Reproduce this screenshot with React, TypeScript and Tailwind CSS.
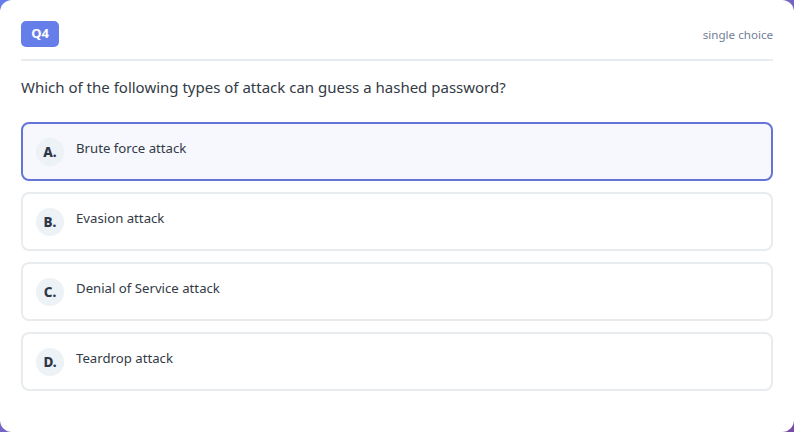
import React, { useState } from 'react'

const options = [
  { key: 'A', text: 'Brute force attack' },
  { key: 'B', text: 'Evasion attack' },
  { key: 'C', text: 'Denial of Service attack' },
  { key: 'D', text: 'Teardrop attack' },
]

export default function App() {
  const [selected, setSelected] = useState('A')

  return (
    <div className="h-[432px] w-full bg-gradient-to-br from-[#667eea] to-[#764ba2]">
      <div
        className="h-[432px] w-full rounded-[12px] bg-white px-[21px] pt-[21px]"
        style={{ fontFamily: '"Noto Sans", "Open Sans", sans-serif' }}
      >
        {/* Header */}
        <div className="flex items-center justify-between border-b-2 border-[#e9ecef] pb-[12px]">
          <span className="flex h-[26px] w-[38px] items-center justify-center rounded-[5px] bg-[#667eea] text-[13px] font-bold text-white">
            Q4
          </span>
          <span className="mt-[2px] text-[11.6px] text-[#718096]">single choice</span>
        </div>

        {/* Question */}
        <p className="mt-[14px] text-[15px] leading-[24px] text-[#333a45]">
          Which of the following types of attack can guess a hashed password?
        </p>

        {/* Options */}
        <div className="mt-[23px] flex flex-col gap-[11px]">
          {options.map((o) => {
            const active = selected === o.key
            return (
              <button
                key={o.key}
                onClick={() => setSelected(o.key)}
                className={`flex h-[59px] items-start gap-[12px] rounded-[8px] border-2 px-[13px] pt-[14px] text-left ${
                  active ? 'border-[#6574d6] bg-[#f6f8fe]' : 'border-[#e9ecef] bg-white'
                }`}
              >
                <span className="flex h-[28px] w-[28px] shrink-0 items-center justify-center rounded-full bg-[#edf2f7] text-[13.5px] font-extrabold text-[#2d3748]">
                  {o.key}.
                </span>
                <span className="text-[13.2px] leading-[20px] text-[#333a45]">{o.text}</span>
              </button>
            )
          })}
        </div>
      </div>
    </div>
  )
}
